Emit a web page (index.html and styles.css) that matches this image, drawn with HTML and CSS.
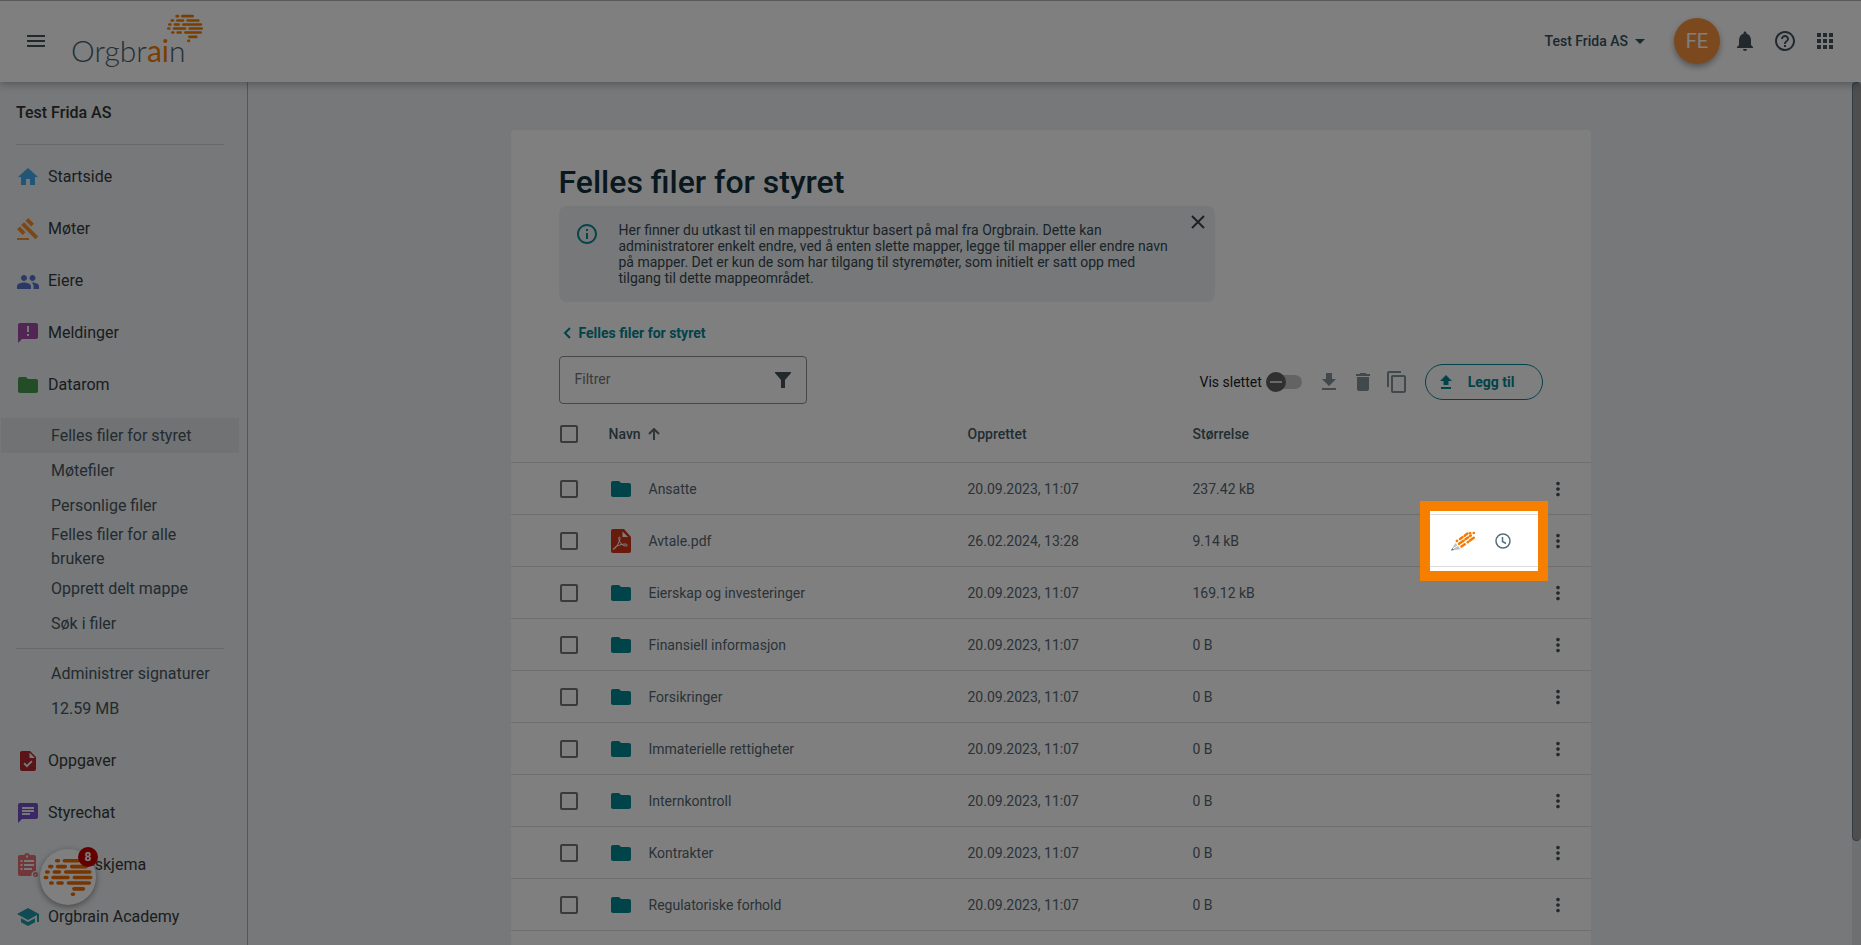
FILE: index.html
```html
<!DOCTYPE html>
<html lang="no">
<head>
<meta charset="utf-8">
<title>Orgbrain – Felles filer for styret</title>
<link rel="stylesheet" href="styles.css">
</head>
<body>
<svg class="sprite" aria-hidden="true">
  <symbol id="brain" viewBox="498 42 114 86">
    <g stroke="currentColor" stroke-width="8" stroke-linecap="round" fill="none">
      <path d="M530 48h4M547 48h31M515 61h4M532 61h17M563 61h32M508 73h3M525 73h11M550 73h53M505 85h3M522 85h33M569 85h36M517 97h3M533 97h9M556 97h46M568 110h21M565 122h2"/>
    </g>
  </symbol>
  <symbol id="folder" viewBox="0 0 24 24"><path d="M10 4H4c-1.100 0-2 .9-2 2v12c0 1.100.9 2 2 2h16c1.100 0 2-.9 2-2V8c0-1.100-.9-2-2-2h-8l-2-2z"/></symbol>
  <symbol id="dots" viewBox="0 0 24 24"><path d="M12 8c1.100 0 2-.9 2-2s-.9-2-2-2-2 .9-2 2 .9 2 2 2zm0 2c-1.100 0-2 .9-2 2s.9 2 2 2 2-.9 2-2-.9-2-2-2zm0 6c-1.100 0-2 .9-2 2s.9 2 2 2 2-.9 2-2-.9-2-2-2z"/></symbol>
</svg>

<header class="topbar">
  <button class="icon-btn" aria-label="Meny"><svg class="i24" viewBox="0 0 24 24"><path d="M3 18h18v-2H3v2zm0-5h18v-2H3v2zm0-7v2h18V6H3z"/></svg></button>
  <a class="logo" href="#" aria-label="Orgbrain">
    <span class="logo-text">Orgbr<span class="logo-accent">ai</span>n</span>
    <svg class="logo-brain"><use href="#brain"/></svg>
  </a>
  <div class="topbar-right">
    <button class="org-btn">Test Frida AS <svg class="caret" viewBox="0 0 10 5"><path d="M0 0l5 5 5-5z"/></svg></button>
    <button class="avatar">FE</button>
    <div class="top-icons">
      <button class="icon-btn" aria-label="Varsler"><svg class="i24" viewBox="0 0 24 24"><path d="M12 22c1.100 0 2-.9 2-2h-4c0 1.100.89 2 2 2zm6-6v-5c0-3.070-1.640-5.640-4.500-6.320V4c0-.83-.67-1.500-1.500-1.500s-1.500.67-1.500 1.500v.68C7.630 5.360 6 7.920 6 11v5l-2 2v1h16v-1l-2-2z"/></svg></button>
      <button class="icon-btn" aria-label="Hjelp"><svg class="i24" viewBox="0 0 24 24"><path d="M11 18h2v-2h-2v2zm1-16C6.480 2 2 6.480 2 12s4.480 10 10 10 10-4.480 10-10S17.520 2 12 2zm0 18c-4.410 0-8-3.590-8-8s3.590-8 8-8 8 3.590 8 8-3.590 8-8 8zm0-14c-2.210 0-4 1.790-4 4h2c0-1.100.9-2 2-2s2 .9 2 2c0 2-3 1.750-3 5h2c0-2.250 3-2.500 3-5 0-2.210-1.790-4-4-4z"/></svg></button>
      <button class="icon-btn" aria-label="Apper"><svg class="i24" viewBox="0 0 24 24"><path d="M4 8h4V4H4v4zm6 12h4v-4h-4v4zm-6 0h4v-4H4v4zm0-6h4v-4H4v4zm6 0h4v-4h-4v4zm6-10v4h4V4h-4zm-6 4h4V4h-4v4zm6 6h4v-4h-4v4zm0 6h4v-4h-4v4z"/></svg></button>
    </div>
  </div>
</header>

<div class="layout">
  <nav class="sidebar">
    <h2 class="side-title">Test Frida AS</h2>
    <hr class="side-line">
    <a class="side-item" href="#"><svg class="i24 c-home" viewBox="0 0 24 24"><path d="M10 20v-6h4v6h5v-8h3L12 3 2 12h3v8z"/></svg>Startside</a>
    <a class="side-item" href="#"><svg class="i24 c-gavel" viewBox="0 0 24 24"><path d="M1 21h12v2H1zM5.240 8.070l2.830-2.830 14.140 14.140-2.830 2.830zM12.320 1l5.660 5.660-2.830 2.830-5.660-5.660zM3.830 9.480l5.660 5.660-2.830 2.830L1 12.310z"/></svg>Møter</a>
    <a class="side-item" href="#"><svg class="i24 c-people" viewBox="0 0 24 24"><path d="M16.500 12c1.660 0 2.990-1.340 2.990-3S18.160 6 16.500 6s-3 1.340-3 3 1.340 3 3 3zM8 12c1.660 0 3-1.340 3-3S9.660 6 8 6 5 7.340 5 9s1.340 3 3 3zm0 1.500c-2.330 0-7 1.170-7 3.500V20h14v-3c0-2.330-4.670-3.500-7-3.500zm8.500 0c-.29 0-.62.02-.97.05 1.160.84 1.970 1.970 1.970 3.450V20H23v-3c0-2.330-4.170-3.500-6.500-3.500z"/></svg>Eiere</a>
    <a class="side-item" href="#"><svg class="i24 c-msg" viewBox="0 0 24 24"><path d="M20 2H4c-1.100 0-2 .9-2 2v18l4-4h14c1.100 0 2-.9 2-2V4c0-1.100-.9-2-2-2z"/><path class="ink" d="M11 5h2v6h-2zM11 13h2v2h-2z"/></svg>Meldinger</a>
    <a class="side-item" href="#"><svg class="i24 c-data"><use href="#folder"/></svg>Datarom</a>
    <div class="sub">
      <a class="sub-item active" href="#">Felles filer for styret</a>
      <a class="sub-item" href="#">Møtefiler</a>
      <a class="sub-item" href="#">Personlige filer</a>
      <a class="sub-item two" href="#">Felles filer for alle brukere</a>
      <a class="sub-item" href="#">Opprett delt mappe</a>
      <a class="sub-item" href="#">Søk i filer</a>
      <hr class="side-line sub-line">
      <a class="sub-item" href="#">Administrer signaturer</a>
      <span class="sub-item">12.59 MB</span>
    </div>
    <a class="side-item" href="#"><svg class="i24 c-task" viewBox="0 0 24 24"><path d="M14 2H6c-1.100 0-2 .9-2 2v16c0 1.100.9 2 2 2h12c1.100 0 2-.9 2-2V8z"/><path class="ink" d="M13.500 3.500V9H19zM10.900 18.500l-3.500-3.500 1.400-1.400 2.100 2.100 4.300-4.300 1.400 1.400z"/></svg>Oppgaver</a>
    <a class="side-item" href="#"><svg class="i24 c-chat" viewBox="0 0 24 24"><path d="M20 2H4c-1.100 0-2 .9-2 2v18l4-4h14c1.100 0 2-.9 2-2V4c0-1.100-.9-2-2-2z"/><path class="ink" d="M6 6h12v2H6zM6 9h12v2H6zM6 12h8v2H6z"/></svg>Styrechat</a>
    <a class="side-item" href="#"><svg class="i24 c-form" viewBox="0 0 24 24"><path d="M18 2h-4.200a3 3 0 0 0-5.600 0H4c-1.100 0-2 .9-2 2v17c0 1.100.9 2 2 2h11.500a4 4 0 0 1 4.500-5V4c0-1.100-.9-2-2-2z"/><circle cx="19.500" cy="21.500" r="2.500"/><path class="ink" d="M4.500 7h2v2h-2zM4.500 11h2v2h-2zM4.500 15h2v2h-2zM8 7h10v2H8zM8 11h10v2H8zM8 15h8v2H8zM10 2.500h2v2h-2z"/><path class="tick" d="M18.300 21.700l.8.8 1.500-1.800"/></svg>Spørreskjema</a>
    <a class="side-item" href="#"><svg class="i24 c-acad" viewBox="0 0 24 24"><path d="M5 13.180v4L12 21l7-3.820v-4L12 17l-7-3.820zM12 3L1 9l11 6 9-4.910V17h2V9L12 3z"/></svg>Orgbrain Academy</a>
  </nav>

  <main class="main">
    <section class="card">
      <h1 class="title">Felles filer for styret</h1>
      <div class="info">
        <svg class="i24 info-icon" viewBox="0 0 24 24"><path d="M11 7h2v2h-2zm0 4h2v6h-2zm1-9C6.480 2 2 6.480 2 12s4.480 10 10 10 10-4.480 10-10S17.520 2 12 2zm0 18c-4.410 0-8-3.590-8-8s3.590-8 8-8 8 3.590 8 8-3.590 8-8 8z"/></svg>
        <p class="info-text">Her finner du utkast til en mappestruktur basert på mal fra Orgbrain. Dette kan administratorer enkelt endre, ved å enten slette mapper, legge til mapper eller endre navn på mapper. Det er kun de som har tilgang til styremøter, som initielt er satt opp med tilgang til dette mappeområdet.</p>
        <button class="close" aria-label="Lukk"><svg viewBox="0 0 14 14"><path d="M1 1l12 12M13 1L1 13"/></svg></button>
      </div>
      <a class="back" href="#"><svg viewBox="0 0 8 12"><path d="M7 1L2 6l5 5"/></svg>Felles filer for styret</a>
      <div class="tools">
        <div class="filter">
          <input type="text" placeholder="Filtrer" aria-label="Filtrer">
          <svg viewBox="0 0 16 16"><path d="M0 0h16v1l-6 7v8H6V8L0 1z"/></svg>
        </div>
        <div class="actions">
          <label class="toggle">Vis slettet<input type="checkbox"><span class="track"><span class="thumb"></span></span></label>
          <button class="icon-btn muted" aria-label="Last ned"><svg class="i24" viewBox="0 0 24 24"><path d="M19 9h-4V3H9v6H5l7 7 7-7zM5 18v2h14v-2H5z"/></svg></button>
          <button class="icon-btn muted" aria-label="Slett"><svg class="i24" viewBox="0 0 24 24"><path d="M6 19c0 1.100.9 2 2 2h8c1.100 0 2-.9 2-2V7H6v12zM19 4h-3.500l-1-1h-5l-1 1H5v2h14V4z"/></svg></button>
          <button class="icon-btn muted" aria-label="Kopier"><svg class="i24" viewBox="0 0 24 24"><path d="M16 1H4c-1.100 0-2 .9-2 2v14h2V3h12V1zm3 4H8c-1.100 0-2 .9-2 2v14c0 1.100.9 2 2 2h11c1.100 0 2-.9 2-2V7c0-1.100-.9-2-2-2zm0 16H8V7h11v14z"/></svg></button>
          <button class="add"><svg viewBox="0 0 12 14"><path d="M6 0l6 6H8.500v4h-5V6H0zM1 12h10v2H1z"/></svg>Legg til</button>
        </div>
      </div>
      <table class="files">
        <colgroup><col class="w-check"><col><col class="w-date"><col class="w-size"><col class="w-status"><col class="w-menu"></colgroup>
        <thead>
          <tr><th><input type="checkbox" aria-label="Velg alle"></th><th>Navn <svg class="sort" viewBox="0 0 12 12"><path d="M6 12V1.500M1 6l5-5 5 5"/></svg></th><th>Opprettet</th><th>Størrelse</th><th></th><th></th></tr>
        </thead>
        <tbody>
          <tr><td><input type="checkbox" aria-label="Velg Ansatte"></td><td><span class="name"><svg class="i24 f"><use href="#folder"/></svg>Ansatte</span></td><td>20.09.2023, 11:07</td><td>237.42 kB</td><td></td><td><button class="menu" aria-label="Mer"><svg><use href="#dots"/></svg></button></td></tr>
          <tr><td><input type="checkbox" aria-label="Velg Avtale.pdf"></td><td><span class="name"><svg class="i24 pdf" viewBox="0 0 24 24"><path d="M4 0h11l7 8v14a2 2 0 0 1-2 2H4a2 2 0 0 1-2-2V2a2 2 0 0 1 2-2z"/><path class="fold" d="M13.500 2.500V8H19z"/><path class="swirl" d="M10.500 8c-1 0-1 2 0 4s3 5 6 5 2-2-.5-2-8 1.500-10.500 3.500-1 2.500 0 1.500c2.500-2.500 5-7.500 5.500-10.500 0-1-.2-1.500-.5-1.500z"/></svg>Avtale.pdf</span></td><td>26.02.2024, 13:28</td><td>9.14 kB</td>
            <td class="status"><span class="status-icons">
              <svg class="i24" viewBox="0 0 24 24"><path d="M4.500 14L0 21.500l9.500-1.300z" fill="#b9c1c7"/><path d="M1 20.500l6.500-4.500" stroke="#fff" stroke-width="1"/><path d="M0 21.500l1.400-2.500 1.400 2.100z" fill="#546e7a"/><g stroke="#f57c00" stroke-width="2.500" stroke-linecap="round"><path d="M5.800 12l.3-.2M9 10l2.500-1.800M13.600 6.700L16.500 4.600"/><path d="M8 14.800l4.500-3M14.500 10.300l2.500-1.800M19 7l.8-.6M22.800 4l.1-.1"/><path d="M10.500 17.500l3.200-2.200M16.700 13.200l.4-.3M19 11.500l3.800-2.700M19 4.200l.2-.1"/></g></svg>
              <svg class="clock" viewBox="0 0 16 16"><circle cx="8" cy="8" r="7"/><path d="M7.500 4v4.500L11 10.500"/></svg>
            </span><span class="spotlight"></span></td>
            <td><button class="menu" aria-label="Mer"><svg><use href="#dots"/></svg></button></td></tr>
          <tr><td><input type="checkbox" aria-label="Velg Eierskap og investeringer"></td><td><span class="name"><svg class="i24 f"><use href="#folder"/></svg>Eierskap og investeringer</span></td><td>20.09.2023, 11:07</td><td>169.12 kB</td><td></td><td><button class="menu" aria-label="Mer"><svg><use href="#dots"/></svg></button></td></tr>
          <tr><td><input type="checkbox" aria-label="Velg Finansiell informasjon"></td><td><span class="name"><svg class="i24 f"><use href="#folder"/></svg>Finansiell informasjon</span></td><td>20.09.2023, 11:07</td><td>0 B</td><td></td><td><button class="menu" aria-label="Mer"><svg><use href="#dots"/></svg></button></td></tr>
          <tr><td><input type="checkbox" aria-label="Velg Forsikringer"></td><td><span class="name"><svg class="i24 f"><use href="#folder"/></svg>Forsikringer</span></td><td>20.09.2023, 11:07</td><td>0 B</td><td></td><td><button class="menu" aria-label="Mer"><svg><use href="#dots"/></svg></button></td></tr>
          <tr><td><input type="checkbox" aria-label="Velg Immaterielle rettigheter"></td><td><span class="name"><svg class="i24 f"><use href="#folder"/></svg>Immaterielle rettigheter</span></td><td>20.09.2023, 11:07</td><td>0 B</td><td></td><td><button class="menu" aria-label="Mer"><svg><use href="#dots"/></svg></button></td></tr>
          <tr><td><input type="checkbox" aria-label="Velg Internkontroll"></td><td><span class="name"><svg class="i24 f"><use href="#folder"/></svg>Internkontroll</span></td><td>20.09.2023, 11:07</td><td>0 B</td><td></td><td><button class="menu" aria-label="Mer"><svg><use href="#dots"/></svg></button></td></tr>
          <tr><td><input type="checkbox" aria-label="Velg Kontrakter"></td><td><span class="name"><svg class="i24 f"><use href="#folder"/></svg>Kontrakter</span></td><td>20.09.2023, 11:07</td><td>0 B</td><td></td><td><button class="menu" aria-label="Mer"><svg><use href="#dots"/></svg></button></td></tr>
          <tr><td><input type="checkbox" aria-label="Velg Regulatoriske forhold"></td><td><span class="name"><svg class="i24 f"><use href="#folder"/></svg>Regulatoriske forhold</span></td><td>20.09.2023, 11:07</td><td>0 B</td><td></td><td><button class="menu" aria-label="Mer"><svg><use href="#dots"/></svg></button></td></tr>
        </tbody>
      </table>
    </section>
  </main>
  <div class="scroll"><div class="scroll-thumb"></div></div>
</div>

<button class="fab" aria-label="Åpne chat"><svg><use href="#brain"/></svg><span class="badge">8</span></button>
</body>
</html>
```
FILE: styles.css
```css
* { box-sizing: border-box; }
html { height: 100%; }
body {
  margin: 0;
  height: 100vh;
  overflow: hidden;
  display: flex;
  flex-direction: column;
  background: #edf0f3;
  color: #37474f;
  font: 14px/16px Roboto, "Liberation Sans", sans-serif;
}
button { border: 0; padding: 0; background: none; font: inherit; color: inherit; cursor: pointer; }
a { color: inherit; text-decoration: none; }
svg { display: block; flex: none; fill: currentColor; }
.sprite { position: absolute; width: 0; height: 0; }
.i24 { width: 24px; height: 24px; }
.icon-btn { display: flex; }

.topbar {
  position: relative;
  z-index: 2;
  flex: none;
  display: flex;
  align-items: center;
  height: 82px;
  padding: 0 24px 1px;
  border-top: 1px solid #b4b4b4;
  background: #fff;
  box-shadow: 0 2px 8px rgba(0, 0, 0, .3);
  color: #45525b;
}
.logo { position: relative; display: block; margin-left: 23px; width: 133px; color: #455f6e; }
.logo-text { display: block; font: 300 30px/40px Lato, "Open Sans", sans-serif; padding-top: 18px; }
.logo-accent { color: #f57c00; font-weight: 400; }
.logo-brain { position: absolute; right: 0; top: 2px; width: 38px; height: 29px; color: #f57c00; }
.topbar-right { display: flex; align-items: center; margin-left: auto; }
.org-btn { display: flex; align-items: center; gap: 7px; font-weight: 500; color: #37505c; }
.caret { width: 10px; height: 5px; }
.avatar {
  width: 46px; height: 46px; margin: 0 13px 0 29px;
  border-radius: 50%;
  background: #f8923c; color: #fff;
  font-size: 20px;
  box-shadow: 0 3px 6px rgba(0, 0, 0, .35);
}
.top-icons { display: flex; gap: 16px; }

.layout { flex: 1; display: flex; min-height: 0; }
.sidebar { flex: none; width: 248px; border-right: 1px solid #a9afb3; color: #353a3c; font-size: 16px; line-height: 24px; }
.side-title { margin: 0; padding: 19px 16px 19px; font-size: 16px; line-height: 24px; font-weight: 500; color: #303435; }
.side-line { margin: 0 23px 6px 16px; border: 0; height: 1px; background: #cfd3d6; }
.side-item { display: flex; align-items: center; gap: 8px; height: 52px; padding-left: 16px; }
.side-item .ink { fill: #edf0f3; }
.side-item .tick { fill: none; stroke: #edf0f3; stroke-width: 1; }
.c-home { color: #45acec; }
.c-gavel { color: #f88f24; }
.c-people { color: #5472cc; }
.c-msg { color: #a34aa8; }
.c-data { color: #449b4c; }
.c-task { color: #b4282f; }
.c-chat { color: #7350c8; }
.c-form { color: #e26f72; overflow: visible; }
.c-acad { color: #1e97a5; }
.sub { padding: 7px 8px 9px 1px; color: #46565f; }
.sub-item { display: flex; align-items: center; height: 35px; padding: 0 40px 0 50px; white-space: nowrap; }
.sub-item.two { height: 48px; white-space: normal; }
.sub-item.active { background: #e2e5e8; }
.sub-line { margin: 7px 15px 7px 15px; }

.main { flex: 1; min-width: 0; padding: 48px 24px; }
.card { max-width: 1080px; margin: 0 auto; padding: 32px 0 48px; background: #fff; border-radius: 4px; }
.title { margin: 0 48px 4px; font-size: 32px; line-height: 40px; font-weight: 500; color: #12303c; }
.info {
  display: flex; align-items: flex-start;
  max-width: 656px; margin: 0 48px; padding: 16px 8px 16px 16px;
  background: #edf0f3; border-radius: 8px;
}
.info-icon { color: #0a8c97; }
.info-text { flex: 1; margin: 0 20px; }
.close { flex: none; width: 18px; height: 16px; margin-top: -8px; }
.close svg { width: 14px; height: 14px; margin: 0 auto; stroke: currentColor; stroke-width: 2; fill: none; }
.back { display: flex; align-items: center; gap: 8px; margin: 23px 48px 15px 52px; color: #008793; font-weight: 700; }
.back svg { width: 8px; height: 12px; fill: none; stroke: currentColor; stroke-width: 2; }
.tools { display: flex; align-items: flex-start; justify-content: space-between; margin: 0 48px; }
.filter { display: flex; align-items: center; width: 248px; height: 48px; padding: 0 15px; border: 1px solid #8e8e8e; border-radius: 4px; }
.filter input { flex: 1; min-width: 0; border: 0; padding: 0 0 3px; background: none; font: inherit; color: #37474f; outline: none; }
.filter input::placeholder { color: #757575; opacity: 1; }
.filter svg { width: 16px; height: 16px; color: #45525b; }
.actions { display: flex; align-items: center; gap: 10px; margin-top: 8px; height: 36px; }
.toggle { display: flex; align-items: center; gap: 4px; margin-right: 5px; color: #212121; }
.toggle input { position: absolute; opacity: 0; }
.track { display: flex; align-items: center; width: 36px; height: 14px; border-radius: 7px; background: #c6c6c6; }
.thumb { display: flex; align-items: center; justify-content: center; width: 20px; height: 20px; border-radius: 50%; background: #616161; }
.thumb::before { content: ""; width: 12px; height: 2px; background: #d5d5d5; }
.muted { color: #82929b; }
.add {
  display: flex; align-items: center; gap: 16px;
  height: 36px; margin-left: 6px; padding: 0 27px 0 14px;
  border: 1px solid #008793; border-radius: 18px;
  color: #008793; font-weight: 700;
}
.add svg { width: 12px; height: 14px; }

.files { width: 100%; margin-top: 3px; border-spacing: 0; table-layout: fixed; }
.w-check { width: 98px; }
.w-date { width: 225px; }
.w-size { width: 227px; }
.w-status { width: 116px; }
.w-menu { width: 55px; }
.files th, .files td { height: 52px; padding: 0; border-bottom: 1px solid #dcdcdc; text-align: left; vertical-align: middle; }
.files th { height: 56px; padding-bottom: 1px; color: #455a64; font-weight: 500; }
.files td { color: #546670; }
.files input { display: block; appearance: none; width: 18px; height: 18px; margin: 0 0 0 49px; border: 2px solid #757575; border-radius: 2px; }
.sort { display: inline-block; width: 12px; height: 12px; margin-left: 4px; vertical-align: -1px; fill: none; stroke: #5f6a70; stroke-width: 2; }
.name { display: flex; align-items: center; gap: 16px; }
.f { color: #008793; }
.pdf { color: #d0371b; }
.pdf .fold { fill: #fff; }
.pdf .swirl { fill: none; stroke: #fff; stroke-width: 1; }
.menu { display: block; margin-left: 11px; color: #45525b; }
.menu svg { width: 22px; height: 22px; }
.status { position: relative; }
.status-icons { display: flex; align-items: center; gap: 20px; padding-left: 31px; }
.clock { width: 16px; height: 16px; fill: none; stroke: #546e7a; stroke-width: 1.500; }
.spotlight {
  position: absolute;
  z-index: 100;
  inset: -14px -12px -15px 0;
  border: 10px solid #f77f00;
  box-shadow: 0 0 0 3000px rgba(0, 0, 0, .5);
  pointer-events: none;
}

.scroll { flex: none; width: 9px; margin-left: -1px; background: #dcdfe3; }
.scroll-thumb { height: 88%; background: #9c9c9c; border: 1px solid #62788a; border-right: 0; border-radius: 5px; }

.fab {
  position: fixed; z-index: 3; left: 40px; bottom: 40px;
  display: flex; align-items: center; justify-content: center;
  width: 56px; height: 56px;
  border-radius: 50%; background: #fff; color: #f06a00;
  box-shadow: 0 2px 6px rgba(0, 0, 0, .4);
}
.fab svg { width: 52px; height: 39px; }
.badge {
  position: absolute; top: -2px; right: -2px;
  width: 20px; height: 20px; border-radius: 50%;
  background: #c40000; color: #fff; font-size: 12px; line-height: 20px; font-weight: 700;
}
```
